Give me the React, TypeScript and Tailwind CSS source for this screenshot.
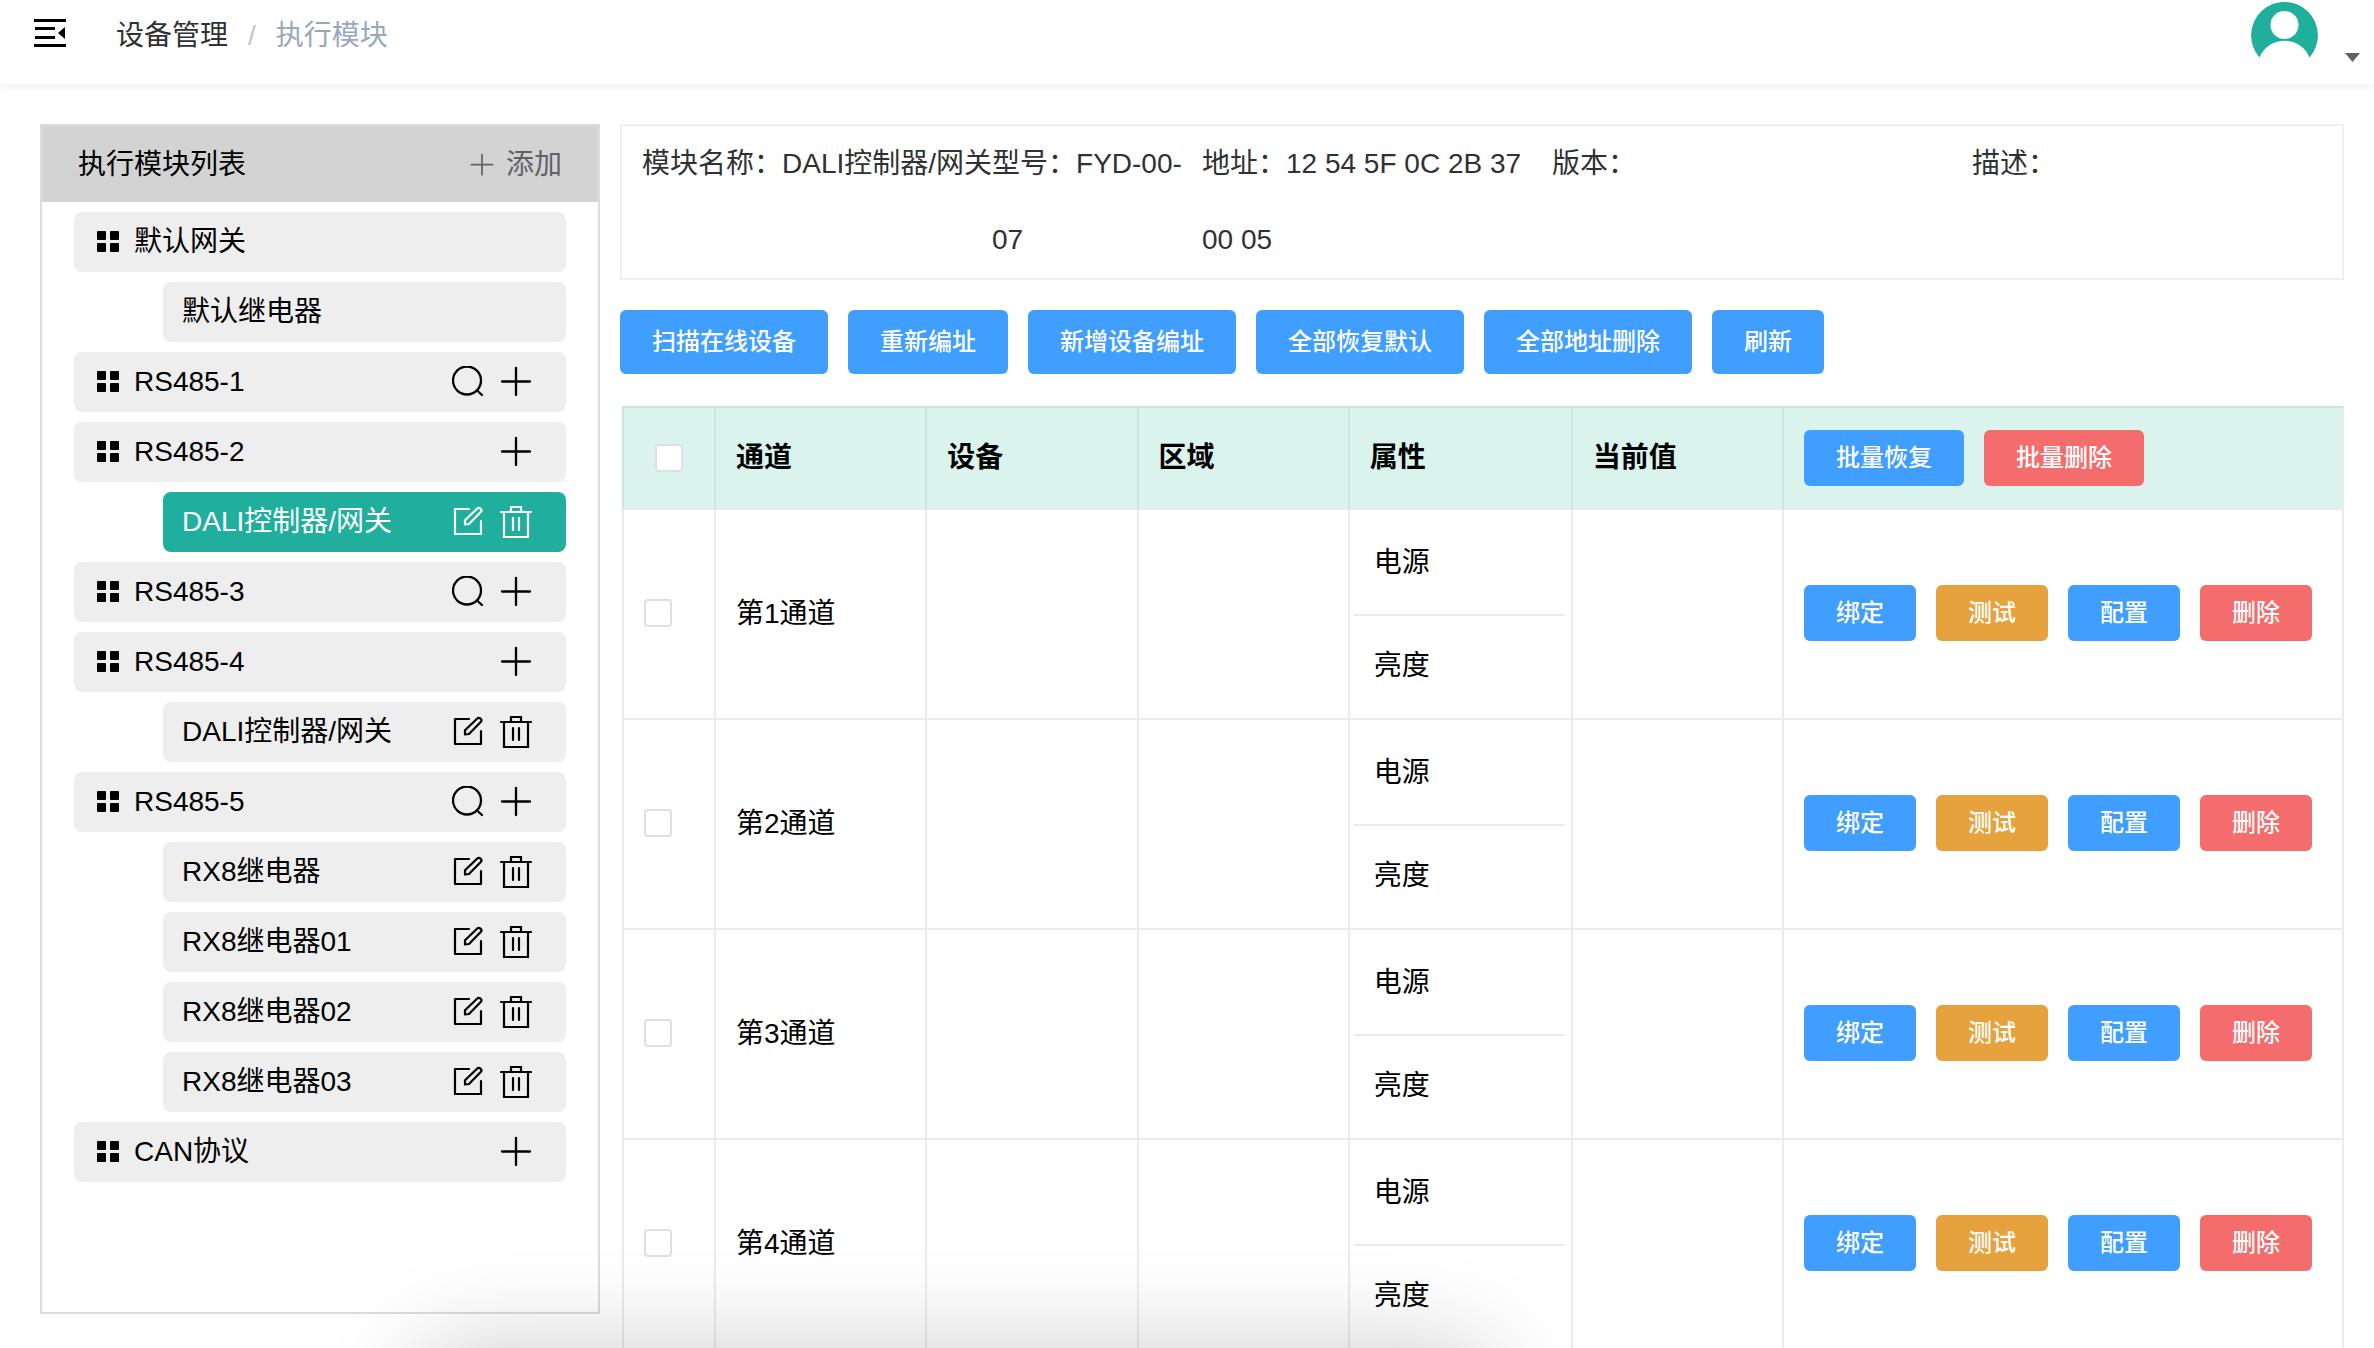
const modules = [
  { name: "默认网关", actions: [], children: ["默认继电器"], fixed: true },
  { name: "RS485-1", actions: ["search", "plus"], children: [] },
  { name: "RS485-2", actions: ["plus"], children: ["DALI控制器/网关"], activeIndex: 0 },
  { name: "RS485-3", actions: ["search", "plus"], children: [] },
  { name: "RS485-4", actions: ["plus"], children: ["DALI控制器/网关"] },
  { name: "RS485-5", actions: ["search", "plus"], children: ["RX8继电器", "RX8继电器01", "RX8继电器02", "RX8继电器03"] },
  { name: "CAN协议", actions: ["plus"], children: [] },
];

const toolbar = ["扫描在线设备", "重新编址", "新增设备编址", "全部恢复默认", "全部地址删除", "刷新"];

const channels = ["第1通道", "第2通道", "第3通道", "第4通道"];

const tones = {
  primary: "bg-[#409eff]",
  warning: "bg-[#e6a23c]",
  danger: "bg-[#f56c6c]",
};

const PlusIcon = ({ className = "size-8" }) => (
  <svg className={className} viewBox="0 0 32 32" fill="none" stroke="currentColor" strokeWidth={2.3} strokeLinecap="round">
    <path d="M16 2v27M2 15.500h28" />
  </svg>
);

const SearchIcon = () => (
  <svg className="size-8" viewBox="0 0 32 32" fill="none" stroke="currentColor" strokeWidth={2.3} strokeLinecap="round">
    <circle cx="15" cy="14.500" r="14" />
    <path d="M25 24.500l5 4.500" />
  </svg>
);

const EditIcon = () => (
  <svg className="size-8" viewBox="0 0 32 32" fill="none" stroke="currentColor" strokeWidth={2.2} strokeLinecap="round" strokeLinejoin="round">
    <path d="M17 3H3v25h26V15" />
    <path d="M13 18.500v-4.300L25 2.800a2.300 2.300 0 0 1 3.700 3.300L17 18z" />
  </svg>
);

const TrashIcon = () => (
  <svg className="size-8" viewBox="0 0 32 32" fill="none" stroke="currentColor" strokeWidth={2.2} strokeLinecap="round">
    <path d="M1 6h30M4 6v25h24V6M11 6V1h10v5M13 12v12M19 12v12" />
  </svg>
);

const GridIcon = () => (
  <svg className="h-[22px] w-[22px]" viewBox="0 0 22 22" fill="currentColor">
    <rect x="0" y="0" width="9" height="9" rx="1" />
    <rect x="13" y="0" width="9" height="9" rx="1" />
    <rect x="0" y="12" width="9" height="9" rx="1" />
    <rect x="13" y="12" width="9" height="9" rx="1" />
  </svg>
);

function IconButton({ type }: { type: string }) {
  return (
    <button type="button" aria-label={type}>
      {type === "search" && <SearchIcon />}
      {type === "plus" && <PlusIcon />}
      {type === "edit" && <EditIcon />}
      {type === "trash" && <TrashIcon />}
    </button>
  );
}

function Button({ children, tone = "primary", large = false }: { children: string; tone?: keyof typeof tones; large?: boolean }) {
  return (
    <button type="button" className={`${tones[tone]} ${large ? "h-16" : "h-14"} rounded-md px-8 text-2xl font-medium text-white`}>
      {children}
    </button>
  );
}

function Checkbox({ label }: { label: string }) {
  return (
    <input
      type="checkbox"
      aria-label={label}
      className="block size-7 appearance-none rounded-sm border-2 border-[#dcdfe6] bg-white checked:bg-[#409eff]"
    />
  );
}

function Sidebar() {
  return (
    <aside className="mb-[34px] w-[560px] shrink-0 border-2 border-[#dcdcdc]">
      <div className="flex h-[76px] items-center justify-between bg-[#d3d3d3] pt-0.5 pr-9 pl-9">
        <h2>执行模块列表</h2>
        <button type="button" className="flex items-center gap-3 text-[#606266]">
          <PlusIcon className="size-6" />
          添加
        </button>
      </div>
      <ul className="flex flex-col gap-2.5 py-2.5 pr-8 pl-8">
        {modules.map((m) => (
          <li key={m.name} className="flex flex-col gap-2.5">
            <div className="flex h-[60px] items-center rounded-lg bg-[#eeeeee] pr-[34px] pl-[23px]">
              <GridIcon />
              <span className="ml-[15px] flex-1">{m.name}</span>
              <div className="flex gap-4">
                {m.actions.map((a) => (
                  <IconButton key={a} type={a} />
                ))}
              </div>
            </div>
            {m.children.map((child, i) => (
              <div
                key={child}
                className={`ml-[89px] flex h-[60px] items-center rounded-lg pr-[34px] pl-[19px] ${
                  m.activeIndex === i ? "bg-[#1faf9c] text-white" : "bg-[#eeeeee]"
                }`}
              >
                <span className="flex-1">{child}</span>
                {!m.fixed && (
                  <div className="flex gap-4">
                    <IconButton type="edit" />
                    <IconButton type="trash" />
                  </div>
                )}
              </div>
            ))}
          </li>
        ))}
      </ul>
    </aside>
  );
}

function ChannelTable() {
  const th = "border-r-2 border-b-2 border-r-[#cde5de] border-b-[#ebebeb] px-5 text-left font-bold";
  const td = "border-r-2 border-b-2 border-[#ebebeb] px-5";
  return (
    <div className="mt-8 pl-0.5">
      <table className="w-full table-fixed border-separate border-spacing-0">
        <colgroup>
          <col className="w-[94px]" />
          <col />
          <col />
          <col />
          <col className="w-[223px]" />
          <col />
          <col className="w-[560px]" />
        </colgroup>
        <thead className="bg-[#daf4ed]">
          <tr className="h-[104px] [&>th]:border-t-2 [&>th]:border-t-[#cde5de]">
            <th className={`${th} border-l-2 border-l-[#cde5de]`}>
              <div className="flex justify-center">
                <Checkbox label="全选" />
              </div>
            </th>
            <th className={th}>通道</th>
            <th className={th}>设备</th>
            <th className={th}>区域</th>
            <th className={th}>属性</th>
            <th className={th}>当前值</th>
            <th className="border-r-2 border-b-2 border-[#ebebeb] px-5">
              <div className="flex gap-5">
                <Button>批量恢复</Button>
                <Button tone="danger">批量删除</Button>
              </div>
            </th>
          </tr>
        </thead>
        <tbody>
          {channels.map((name) => (
            <tr key={name} className="h-[210px]">
              <td className={`${td} border-l-2 pb-0.5`}>
                <Checkbox label={name} />
              </td>
              <td className={td}>{name}</td>
              <td className={td} />
              <td className={td} />
              <td className="border-r-2 border-b-2 border-[#ebebeb] pr-1.5 pl-1">
                <div className="border-b-2 border-[#ebebeb] pl-5 leading-[102px]">电源</div>
                <div className="pl-5 leading-[100px]">亮度</div>
              </td>
              <td className={td} />
              <td className={`${td} pb-0.5`}>
                <div className="flex gap-5">
                  <Button>绑定</Button>
                  <Button tone="warning">测试</Button>
                  <Button>配置</Button>
                  <Button tone="danger">删除</Button>
                </div>
              </td>
            </tr>
          ))}
        </tbody>
      </table>
    </div>
  );
}

export default function App() {
  return (
    <div className="relative flex h-screen flex-col overflow-hidden bg-white font-['Liberation_Sans','Noto_Sans_CJK_SC',sans-serif] text-[28px] leading-10 text-black">
      <header className="flex h-[84px] shrink-0 items-start shadow-[0_2px_8px_rgba(0,21,41,0.08)]">
        <button type="button" aria-label="折叠菜单" className="mt-[17px] ml-[34px]">
          <svg className="size-8" viewBox="0 0 32 32" fill="currentColor">
            <path d="M0 2h32v3H0zM1 10h20v3H1zM1 19h20v3H1zM0 27h32v3H0zM31 10v12l-7-6z" />
          </svg>
        </button>
        <nav aria-label="breadcrumb" className="mt-4 ml-[50px] flex">
          <a href="#" className="text-[#303133]">设备管理</a>
          <span className="mx-5 text-[#c0c4cc]">/</span>
          <span className="text-[#97a8be]">执行模块</span>
        </nav>
        <button type="button" aria-label="用户菜单" className="mt-0.5 mr-[14px] ml-auto flex items-end gap-[27px]">
          <svg className="h-[68px] w-[67px]" viewBox="0 0 67 68">
            <path d="M8.500 55.500A33.400 33.400 0 1 1 58.500 55.500A27 27 0 0 0 8.500 55.500Z" fill="#1faf9c" />
            <circle cx="33.500" cy="23" r="14" fill="#fff" />
          </svg>
          <svg className="mb-2 h-[9px] w-[15px]" viewBox="0 0 15 9" fill="#606266">
            <path d="M0 0h15L7.500 9z" />
          </svg>
        </button>
      </header>

      <div className="flex min-h-0 flex-1 gap-5 pt-10 pr-[30px] pl-10">
        <Sidebar />
        <main className="min-w-0 flex-1">
          <section className="grid grid-cols-[5fr_3fr_5fr_6fr_5fr] border-2 border-[#eeeeee] px-5 leading-[76px] text-[#303133]">
            <div className="whitespace-nowrap">模块名称：DALI控制器/网关</div>
            <div>型号：FYD-00-07</div>
            <div>地址：12 54 5F 0C 2B 37 00 05</div>
            <div>版本：</div>
            <div>描述：</div>
          </section>
          <div className="mt-[30px] flex gap-5">
            {toolbar.map((label) => (
              <Button key={label} large>
                {label}
              </Button>
            ))}
          </div>
          <ChannelTable />
        </main>
      </div>

      {/* soft shade rising from the bottom edge */}
      <div className="pointer-events-none absolute top-full left-[420px] h-40 w-[1070px] rounded-3xl shadow-[0_0_100px_rgba(0,0,0,0.2)]" />
    </div>
  );
}
